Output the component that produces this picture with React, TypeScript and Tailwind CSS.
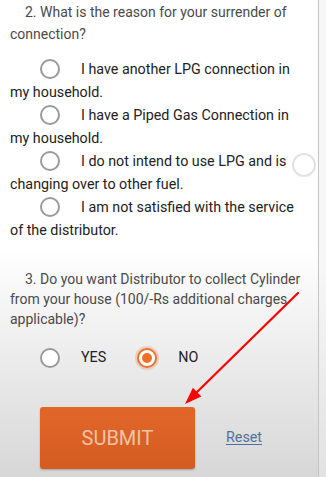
import type { ReactNode } from "react";

const font = { fontFamily: "Roboto, 'Noto Sans', Arial, sans-serif" };

function Radio({ checked = false }: { checked?: boolean }) {
  if (checked) {
    return (
      <span className="inline-flex h-[20px] w-[20px] items-center justify-center rounded-full border-2 border-[#e8722f] bg-white align-middle shadow-[0_0_0_2px_rgba(240,150,100,0.35)]">
        <span className="h-[10px] w-[10px] rounded-full bg-[#ec6f2a]" />
      </span>
    );
  }
  return <span className="inline-block h-[20px] w-[20px] rounded-full border-2 border-[#9a9a9a] bg-white align-middle" />;
}

function Option({ children }: { children: ReactNode }) {
  return (
    <p className="text-[14.3px] leading-[23px] text-[#222]">
      <span className="ml-[30px] mr-[21px] inline-block -translate-y-px">
        <Radio />
      </span>
      {children}
    </p>
  );
}

export default function App() {
  return (
    <div className="relative flex h-[477px] w-[326px] overflow-hidden" style={font}>
      <div className="w-[319px] shrink-0 border-r border-[#c4c4c4] bg-[linear-gradient(to_bottom,#ffffff_0%,#ffffff_52%,#d7d7d7_100%)] pl-[10px] pr-[13px] pt-px">
        <p className="indent-[15px] text-[14px] leading-[22px] text-[#4a4a4a]">
          2. What is the reason for your surrender of connection?
        </p>

        <div className="mt-[13px]">
          <Option>I have another LPG connection in my household.</Option>
          <Option>I have a Piped Gas Connection in my household.</Option>
          <Option>I do not intend to use LPG and is changing over to other fuel.</Option>
          <Option>I am not satisfied with the service of the distributor.</Option>
        </div>

        <p className="mt-[27px] indent-[15px] text-[14px] leading-[20px] text-[#4a4a4a]">
          3. Do you want Distributor to collect Cylinder from your house (100/-Rs additional charges applicable)?
        </p>

        <div className="mt-[17px] flex h-[24px] items-center pl-[30px] text-[14.3px] text-[#222]">
          <Radio />
          <span className="ml-[21px]">YES</span>
          <span className="ml-[31px] inline-flex">
            <Radio checked />
          </span>
          <span className="ml-[21px]">NO</span>
        </div>

        <div className="mt-[37px] flex items-center pl-[30px]">
          <button className="flex h-[62px] w-[155px] items-center justify-center rounded-[3px] bg-[linear-gradient(to_bottom,#e2662a,#d45c21)] text-[20px] text-[#f1c3a4] shadow-[0_1px_2px_rgba(0,0,0,0.25)]">
            SUBMIT
          </button>
          <a className="ml-[31px] text-[14.3px] text-[#52709a] underline underline-offset-2">Reset</a>
        </div>
      </div>
      <div className="flex-1 bg-[linear-gradient(to_bottom,#f7f7f7,#f7f7f7_55%,#e2e2e2)]" />

      <span className="absolute left-[292px] top-[153px] h-[24px] w-[24px] rounded-full border-2 border-[#e2e2e2] bg-white/60" />

      <svg className="pointer-events-none absolute left-0 top-0" width="326" height="477" viewBox="0 0 326 477">
        <line x1="298" y1="293" x2="195" y2="394" stroke="#f00" strokeWidth="2.2" strokeLinecap="round" />
        <polygon points="185,404 192.9,387.8 201.3,396.4" fill="#f00" />
      </svg>
    </div>
  );
}
